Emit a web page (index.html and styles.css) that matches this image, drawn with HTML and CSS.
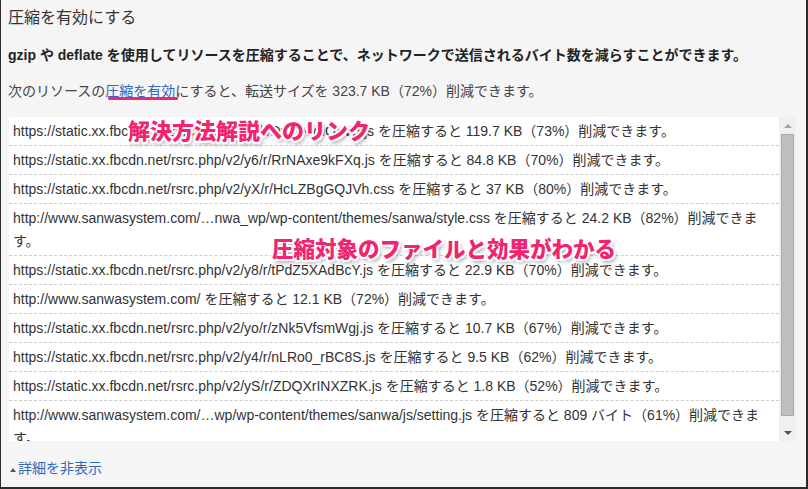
FILE: index.html
```html
<!DOCTYPE html>
<html lang="ja">
<head>
<meta charset="utf-8">
<link rel="stylesheet" href="styles.css">
</head>
<body>
<div class="frame">
  <h1 class="title">圧縮を有効にする</h1>
  <p class="lead"><b>gzip</b> や <b>deflate</b> を使用してリソースを圧縮することで、ネットワークで送信されるバイト数を減らすことができます。</p>
  <p class="desc">次のリソースの<a class="link">圧縮を有効</a>にすると、転送サイズを 323.7 KB（72%）削減できます。</p>
  <div class="box">
    <ul class="list">
      <li>https://static.xx.fbcdn.net/rsrc.php/v2/yk/r/DvEjNxuOxVp.js を圧縮すると 119.7 KB（73%）削減できます。</li>
      <li>https://static.xx.fbcdn.net/rsrc.php/v2/y6/r/RrNAxe9kFXq.js を圧縮すると 84.8 KB（70%）削減できます。</li>
      <li>https://static.xx.fbcdn.net/rsrc.php/v2/yX/r/HcLZBgGQJVh.css を圧縮すると 37 KB（80%）削減できます。</li>
      <li>http://www.sanwasystem.com/…nwa_wp/wp-content/themes/sanwa/style.css を圧縮すると 24.2 KB（82%）削減できます。</li>
      <li>https://static.xx.fbcdn.net/rsrc.php/v2/y8/r/tPdZ5XAdBcY.js を圧縮すると 22.9 KB（70%）削減できます。</li>
      <li>http://www.sanwasystem.com/ を圧縮すると 12.1 KB（72%）削減できます。</li>
      <li>https://static.xx.fbcdn.net/rsrc.php/v2/yo/r/zNk5VfsmWgj.js を圧縮すると 10.7 KB（67%）削減できます。</li>
      <li>https://static.xx.fbcdn.net/rsrc.php/v2/y4/r/nLRo0_rBC8S.js を圧縮すると 9.5 KB（62%）削減できます。</li>
      <li>https://static.xx.fbcdn.net/rsrc.php/v2/yS/r/ZDQXrINXZRK.js を圧縮すると 1.8 KB（52%）削減できます。</li>
      <li>http://www.sanwasystem.com/…wp/wp-content/themes/sanwa/js/setting.js を圧縮すると 809 バイト（61%）削減できます。</li>
    </ul>
    <div class="scrollbar">
      <div class="arrow up"></div>
      <div class="thumb"></div>
      <div class="arrow down"></div>
    </div>
  </div>
  <p class="toggle"><span class="tri"></span><a class="link">詳細を非表示</a></p>

  <div class="underline"></div>
  <div class="note note1">解決方法解説へのリンク</div>
  <div class="note note2">圧縮対象のファイルと効果がわかる</div>
</div>
</body>
</html>
```
FILE: styles.css
```css
html, body {
  margin: 0;
  padding: 0;
}
body {
  font-family: "Liberation Sans", "Noto Sans CJK JP", sans-serif;
  font-size: 14px;
  color: #333;
}
.frame {
  position: relative;
  width: 808px;
  height: 489px;
  box-sizing: border-box;
  background: #f5f5f5;
  border-left: 1px solid #2b2b2b;
  border-right: 2px solid #2b2b2b;
  border-bottom: 2px solid #2b2b2b;
  padding: 8px 10px 0 7px;
  overflow: hidden;
}
.title {
  margin: 0;
  font-size: 16px;
  font-weight: normal;
  line-height: 20px;
  color: #333;
}
.lead {
  margin: 17px 0 0;
  line-height: 20px;
  font-weight: bold;
  color: #222;
}
.lead b {
  font-weight: bold;
}
.desc {
  margin: 16px 0 0;
  line-height: 20px;
  color: #444;
}
.link {
  color: #2f68bf;
  text-decoration: none;
}
.box {
  margin: 16px 0 0 1px;
  height: 324px;
  display: flex;
  background: #fff;
}
.list {
  flex: 1;
  margin: 0;
  padding: 0;
  list-style: none;
  overflow: hidden;
  color: #333;
}
.list li {
  padding: 3px 10px 2px 4px;
  line-height: 23px;
  border-bottom: 1px dashed #cdcdcd;
}
.scrollbar {
  width: 17px;
  background: #f0f0f0;
  display: flex;
  flex-direction: column;
  align-items: center;
}
.arrow {
  width: 0;
  height: 0;
  border-left: 4px solid transparent;
  border-right: 4px solid transparent;
}
.arrow.up {
  margin-top: 7px;
  border-bottom: 4px solid #a3a3a3;
}
.thumb {
  margin-top: 6px;
  width: 13px;
  height: 282px;
  box-sizing: border-box;
  background: #bfbfbf;
  border: 1px solid #a8a8a8;
}
.arrow.down {
  margin-top: 15px;
  border-top: 4px solid #505050;
}
.toggle {
  margin: 17px 0 0 1px;
  line-height: 20px;
  display: flex;
  align-items: center;
}
.tri {
  width: 0;
  height: 0;
  border-left: 3px solid transparent;
  border-right: 3px solid transparent;
  border-bottom: 4px solid #555;
  margin: 3px 2px 0 1px;
}
.underline {
  position: absolute;
  left: 107px;
  top: 97px;
  width: 70px;
  height: 3px;
  border-radius: 2px;
  background: #f0266f;
}
.note {
  position: absolute;
  font-family: "Noto Sans CJK JP", sans-serif;
  font-weight: 900;
  color: #f4236f;
  line-height: 1;
  white-space: nowrap;
  text-shadow:
    2px 0 0 #fff, -2px 0 0 #fff, 0 2px 0 #fff, 0 -2px 0 #fff,
    1.5px 1.5px 0 #fff, -1.5px 1.5px 0 #fff, 1.5px -1.5px 0 #fff, -1.5px -1.5px 0 #fff,
    2px 3px 4px rgba(0, 0, 0, 0.45);
}
.note1 {
  left: 127px;
  top: 118px;
  font-size: 22px;
}
.note2 {
  left: 271px;
  top: 237px;
  font-size: 21.5px;
}
```
